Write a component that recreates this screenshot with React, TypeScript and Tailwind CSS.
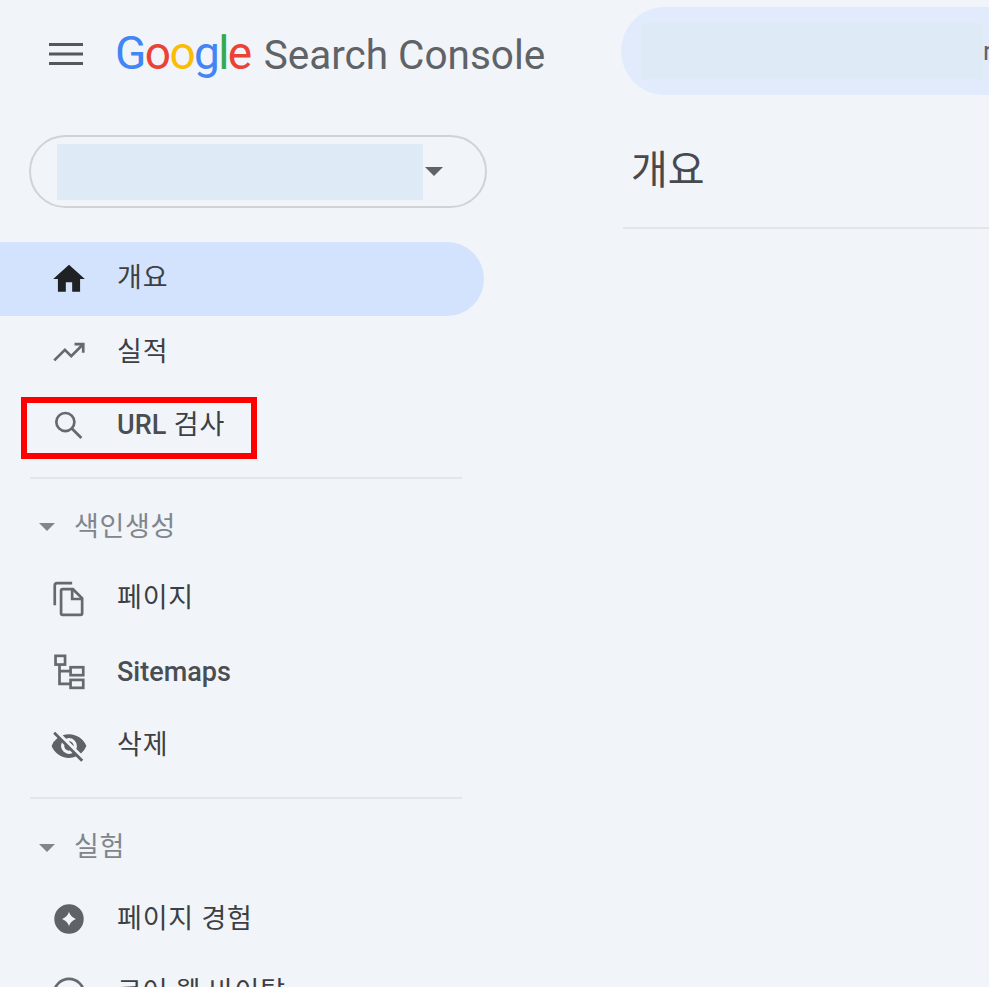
const kr = "font-['Roboto','Noto_Sans_CJK_KR',sans-serif]";

function Icon({ children }: { children: React.ReactNode }) {
  return (
    <svg viewBox="0 0 24 24" className="w-[38px] h-[38px] shrink-0 text-[#5f6368]" fill="currentColor">
      {children}
    </svg>
  );
}

function LineIcon({ children }: { children: React.ReactNode }) {
  return (
    <svg
      viewBox="0 0 24 24"
      className="w-[38px] h-[38px] shrink-0 text-[#666a6f]"
      fill="none"
      stroke="currentColor"
      strokeWidth="1.7"
    >
      {children}
    </svg>
  );
}

function Caret({ className }: { className: string }) {
  return (
    <svg viewBox="0 0 10 5" className={className} fill="currentColor">
      <path d="M0 0l5 5 5-5z" />
    </svg>
  );
}

function NavItem({ icon, label, active }: { icon: React.ReactNode; label: React.ReactNode; active?: boolean }) {
  return (
    <div
      className={
        "h-[73.5px] w-[484px] flex items-center pl-[50px] gap-[29px] rounded-r-[37px] " +
        (active ? "bg-[#d3e3fd]" : "")
      }
    >
      {icon}
      <span className={kr + " text-[27px] text-[#3c4043] leading-none tracking-[0.8px]"}>{label}</span>
    </div>
  );
}

function Latin({ children }: { children: string }) {
  return <span className="font-medium tracking-normal text-[#4a4e52]">{children}</span>;
}

function SectionLabel({ label }: { label: string }) {
  return (
    <div className="h-[70px] flex items-center pl-[39px] gap-[19px] text-[#80868b]">
      <Caret className="w-[16px] h-[8px]" />
      <span className={kr + " text-[27px] leading-none tracking-[0.7px]"}>{label}</span>
    </div>
  );
}

export default function App() {
  return (
    <div className="relative h-[987px] w-[989px] overflow-hidden bg-[#f1f4f9] flex">
      <aside className="w-[621px] shrink-0">
        <div className="h-[108px] flex items-center pl-[49px]">
          <svg viewBox="0 0 34 22" className="w-[34px] h-[22px] shrink-0 text-[#54575b]" fill="currentColor">
            <path d="M0 0h34v3H0zM0 9.5h34v3H0zM0 19h34v3H0z" />
          </svg>
          <div className="ml-[32px] pb-[3px] flex items-baseline font-['Roboto',sans-serif] leading-none">
            <span className="text-[46px] tracking-[-1.6px]">
              <span className="text-[#4285f4]">G</span>
              <span className="text-[#ea4335]">o</span>
              <span className="text-[#fbbc05]">o</span>
              <span className="text-[#4285f4]">g</span>
              <span className="text-[#34a853]">l</span>
              <span className="text-[#ea4335]">e</span>
            </span>
            <span className="ml-[13px] text-[40.5px] text-[#5f6368]">Search Console</span>
          </div>
        </div>

        <div className="ml-[29px] mt-[27px] h-[73px] w-[458px] rounded-full border-2 border-[#d0d3d6] flex items-center pl-[26px]">
          <div className="h-[56px] w-[366px] bg-[#deeaf6]" />
          <Caret className="ml-[2px] w-[18px] h-[9px] text-[#5f6368]" />
        </div>

        <nav className="mt-[34px]">
          <NavItem
            active
            label="개요"
            icon={
              <svg viewBox="0 0 24 24" className="w-[38px] h-[38px] shrink-0 text-[#202124]" fill="currentColor">
                <path d="M10 20v-6h4v6h5v-8h3L12 3 2 12h3v8z" />
              </svg>
            }
          />
          <NavItem
            label="실적"
            icon={
              <LineIcon>
                <path d="M2.7 17.3l6.7-6.7 4 4 6.9-6.900M15.500 7H21v5.500" />
              </LineIcon>
            }
          />
          <NavItem
            label={
              <>
                <Latin>URL</Latin> 검사
              </>
            }
            icon={
              <LineIcon>
                <circle cx="9.700" cy="9.500" r="5.700" />
                <path d="M13.800 13.600l6 6" />
              </LineIcon>
            }
          />
          <div className="ml-[30px] mt-[14.5px] w-[432px] h-[2px] bg-[#e3e5e8]" />
          <div className="mt-[13px]">
            <SectionLabel label="색인생성" />
          </div>
          <NavItem
            label="페이지"
            icon={
              <LineIcon>
                <path d="M3 16V3.500A1.500 1.500 0 0 1 4.500 2H14" />
                <path d="M7 6.800A1 1 0 0 1 8 5.800h6.500L20.300 11.600V21a1 1 0 0 1-1 1H8a1 1 0 0 1-1-1z" />
                <path d="M14 6v6h6" />
              </LineIcon>
            }
          />
          <NavItem
            label={<Latin>Sitemaps</Latin>}
            icon={
              <LineIcon>
                <rect x="3.500" y="1.800" width="6" height="5.500" />
                <rect x="13" y="9" width="8" height="5" />
                <rect x="13" y="17" width="8" height="5" />
                <path d="M6 7.300V19.500h7M6 11.500h7" />
              </LineIcon>
            }
          />
          <NavItem
            label="삭제"
            icon={
              <Icon>
                <path d="M12 7a5 5 0 0 1 5 5c0 .65-.13 1.260-.36 1.830l2.920 2.920A11.800 11.800 0 0 0 23 12c-1.730-4.390-6-7.500-11-7.500-1.400 0-2.740.25-3.980.7l2.160 2.160C10.740 7.130 11.350 7 12 7zM2 4.270l2.280 2.280.46.46A11.800 11.800 0 0 0 1 12c1.730 4.390 6 7.500 11 7.500 1.550 0 3.030-.3 4.380-.84l.42.42L19.730 22 21 20.730 3.270 3 2 4.270zM7.530 9.800l1.550 1.550A2.800 2.800 0 0 0 9 12a3 3 0 0 0 3 3c.22 0 .44-.03.65-.08l1.550 1.550A5 5 0 0 1 7.530 9.800zm4.310-.78l3.150 3.150.02-.16a3 3 0 0 0-3-3l-.17.01z" />
              </Icon>
            }
          />
          <div className="ml-[30px] mt-[14px] w-[432px] h-[2px] bg-[#e3e5e8]" />
          <div className="mt-[14px]">
            <SectionLabel label="실험" />
          </div>
          <NavItem
            label="페이지 경험"
            icon={
              <Icon>
                <path
                  fillRule="evenodd"
                  d="M12 2.700a9.300 9.300 0 1 1 0 18.600 9.300 9.300 0 0 1 0-18.600zm0 4.900c-.9 2.300-2.100 3.500-4.400 4.400 2.300.9 3.500 2.100 4.400 4.400.9-2.300 2.100-3.500 4.400-4.400-2.300-.9-3.500-2.100-4.400-4.400z"
                />
              </Icon>
            }
          />
          <NavItem
            label="코어 웹 바이탈"
            icon={
              <LineIcon>
                <path d="M5 19a9.500 9.500 0 1 1 14 0" />
              </LineIcon>
            }
          />
        </nav>
      </aside>

      <main className="flex-1 min-w-0">
        <div className="mt-[7px] h-[88px] w-[420px] rounded-l-[44px] bg-[#e1ebfc] flex items-center pl-[20px]">
          <div className="h-[56px] w-[342px] shrink-0 bg-[#deeaf6]" />
          <span className="text-[#5f6368] text-[26px] leading-none font-['Roboto',sans-serif]">r</span>
        </div>
        <h1 className={kr + " mt-[51px] pl-[10px] text-[40px] font-normal leading-[50px] text-[#47494d]"}>개요</h1>
        <div className="mt-[31px] ml-[2px] h-[2px] bg-[#e3e5e8]" />
      </main>

      <div className="absolute left-[21px] top-[397px] h-[62px] w-[236px] border-[6px] border-[#ff0000]" />
    </div>
  );
}
